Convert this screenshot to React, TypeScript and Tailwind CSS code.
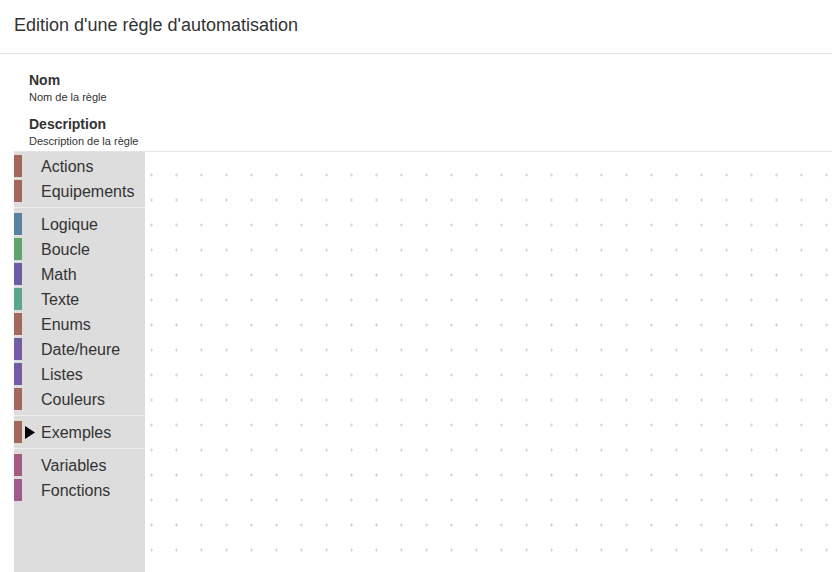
import React from "react";

type Cat = { label: string; color: string; expandable?: boolean };

const groups: Cat[][] = [
  [
    { label: "Actions", color: "#a5675b" },
    { label: "Equipements", color: "#a5675b" },
  ],
  [
    { label: "Logique", color: "#5b80a5" },
    { label: "Boucle", color: "#5ba56b" },
    { label: "Math", color: "#6e5ba5" },
    { label: "Texte", color: "#5ba58c" },
    { label: "Enums", color: "#a5675b" },
    { label: "Date/heure", color: "#745ba5" },
    { label: "Listes", color: "#745ba5" },
    { label: "Couleurs", color: "#a5675b" },
  ],
  [{ label: "Exemples", color: "#a5675b", expandable: true }],
  [
    { label: "Variables", color: "#a55b80" },
    { label: "Fonctions", color: "#a05b8e" },
  ],
];

const CategoryRow: React.FC<{ cat: Cat }> = ({ cat }) => (
  <div className="flex items-center h-[25px] pb-[3px]">
    <div className="w-2 h-full" style={{ backgroundColor: cat.color }} />
    <div className="w-[19px] h-full flex items-center pl-[3px]">
      {cat.expandable && (
        <svg width="10" height="13" viewBox="0 0 10 13">
          <polygon points="0,0 10,6.5 0,13" fill="#000" />
        </svg>
      )}
    </div>
    <span className="text-base leading-none text-[#333] pt-[2px]">{cat.label}</span>
  </div>
);

const App: React.FC = () => {
  return (
    <div className="h-[572px] w-[832px] overflow-hidden bg-white flex flex-col font-['Liberation_Sans',Arial,sans-serif]">
      {/* Header */}
      <div className="h-[54px] shrink-0 border-b border-[#e5e5e5] flex items-center pl-[14px] pb-[3px]">
        <h1 className="text-[18px] text-[#333]">Edition d'une règle d'automatisation</h1>
      </div>

      {/* Fields */}
      <div className="pl-[29px] pt-[16px] text-[#333]">
        <div className="text-sm font-bold leading-[20px]">Nom</div>
        <div className="text-[11px] leading-[14px]">Nom de la règle</div>
        <div className="text-sm font-bold leading-[20px] mt-[10px]">Description</div>
        <div className="text-[11px] leading-[14px]">Description de la règle</div>
      </div>

      {/* Editor */}
      <div className="flex-1 ml-[14px] mt-[3px] border-t border-[#e2e2e2] flex min-h-0">
        <div className="w-[131px] shrink-0 bg-[#dddddd] pt-[3px] flex flex-col">
          {groups.map((g, gi) => (
            <div key={gi} className="flex flex-col">
              {gi > 0 && (
                <div className="pt-[2px] pb-[5px]">
                  <div className="h-px bg-[#ececec]" />
                </div>
              )}
              {g.map((c) => (
                <CategoryRow key={c.label} cat={c} />
              ))}
            </div>
          ))}
        </div>
        <div className="flex-1 relative">
          <svg className="absolute inset-0 w-full h-full">
            <defs>
              <pattern id="grid" width="25" height="25" patternUnits="userSpaceOnUse">
                <rect x="5" y="22.5" width="3" height="1" fill="#d2d2d2" />
                <rect x="6" y="21.5" width="1" height="3" fill="#d2d2d2" />
              </pattern>
            </defs>
            <rect width="100%" height="100%" fill="url(#grid)" />
          </svg>
        </div>
      </div>
    </div>
  );
};

export default App;
